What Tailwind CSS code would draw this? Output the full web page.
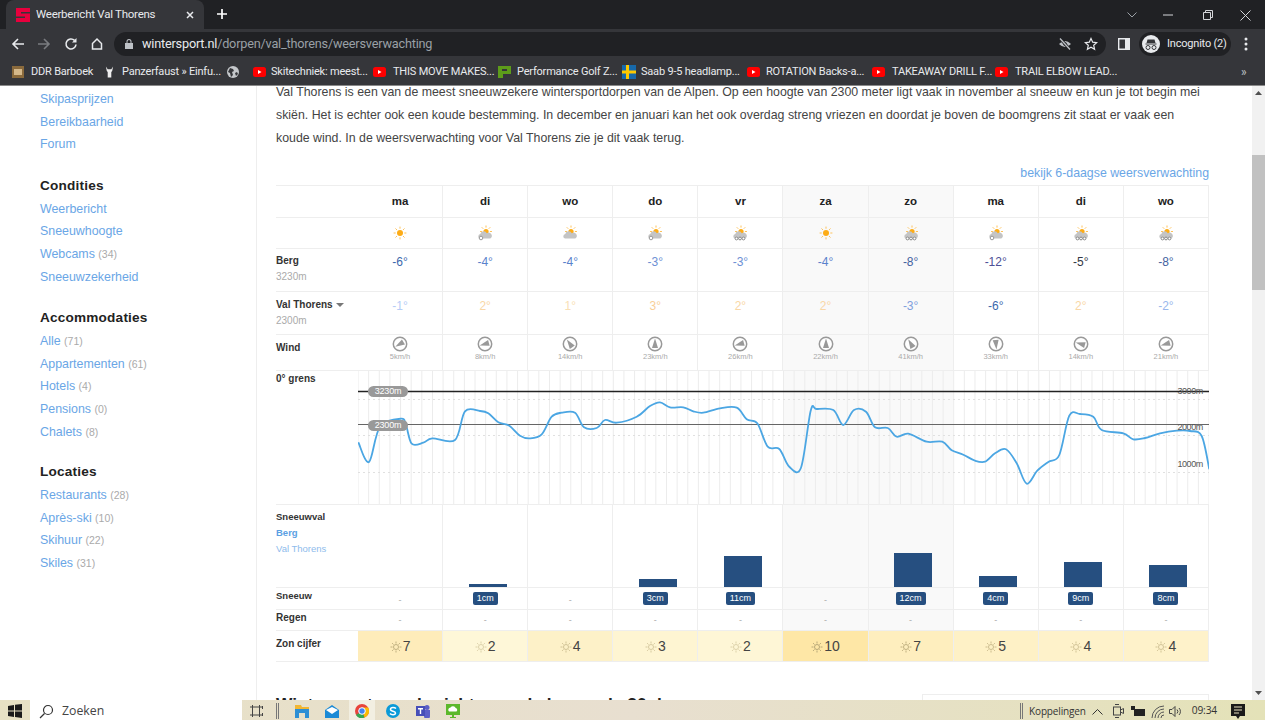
<!DOCTYPE html>
<html lang="nl">
<head>
    <meta charset="UTF-8">
    <meta name="viewport" content="width=device-width, initial-scale=1.0">
    <script src="https://cdn.jsdelivr.net/npm/@tailwindcss/browser@4"></script>
    <title>Weerbericht Val Thorens</title>
</head>
<body class="bg-white overflow-hidden">
<div class="w-[1265px] h-[720px] flex flex-col overflow-hidden font-['Liberation_Sans',sans-serif]">

    <!-- tabs -->
    <div class="h-[29px] shrink-0 bg-[#202124] flex items-end text-[#e8eaed] font-['Roboto',sans-serif]">
        <div class="ml-[6px] w-[198px] h-[29px] bg-[#35363a] rounded-t-lg flex items-center pl-[10px] pr-[9px]">
            <svg class="w-[14px] h-[14px]" viewBox="0 0 14 14"><path fill="#e8003d" d="M0 0h14v4H5v1.500h9V14H0v-4h9V8.500H0z"/></svg>
            <span class="ml-[6px] text-[11.5px] whitespace-nowrap tracking-[-0.25px]">Weerbericht Val Thorens</span>
            <svg class="ml-auto w-[10px] h-[10px]" viewBox="0 0 10 10"><path d="M2 2l6 6M8 2l-6 6" stroke="#e8eaed" stroke-width="1.500"/></svg>
        </div>
        <svg class="ml-[12px] mb-[9px] w-[12px] h-[12px]" viewBox="0 0 12 12"><path d="M6 1v10M1 6h10" stroke="#fff" stroke-width="1.700"/></svg>
        <div class="ml-auto h-[28px] flex items-center">
            <svg class="w-[10px] h-[6px] mr-[26px]" viewBox="0 0 10 6"><path d="M.5.500L5 5 9.500.5" fill="none" stroke="#9aa0a6"/></svg>
            <svg class="w-[10px] h-[2px] mr-[30px]" viewBox="0 0 10 2"><path d="M0 1h10" stroke="#d5d7da"/></svg>
            <svg class="w-[10px] h-[10px] mr-[27px]" viewBox="0 0 10 10"><path d="M.5 2.500h7v7h-7zM2.500 2.500v-2h7v7h-2" fill="none" stroke="#d5d7da"/></svg>
            <svg class="w-[11px] h-[11px] mr-[14px]" viewBox="0 0 11 11"><path d="M.5.500l10 10M10.500.5l-10 10" stroke="#d5d7da"/></svg>
        </div>
    </div>

    <!-- toolbar -->
    <div class="h-[30px] shrink-0 bg-[#35363a] flex items-center font-['Roboto',sans-serif]">
        <svg class="ml-[11px] w-[14px] h-[14px]" viewBox="0 0 14 14"><path d="M13 7H2M7 2L2 7l5 5" fill="none" stroke="#e8eaed" stroke-width="1.600"/></svg>
        <svg class="ml-[12px] w-[14px] h-[14px]" viewBox="0 0 14 14"><path d="M1 7h11M7 2l5 5-5 5" fill="none" stroke="#7a7c80" stroke-width="1.600"/></svg>
        <svg class="ml-[13px] w-[14px] h-[14px]" viewBox="0 0 14 14"><path d="M12 7.500A5 5 0 1 1 10.500 3.400" fill="none" stroke="#e8eaed" stroke-width="1.600"/><path d="M12.500 1v4.500H8z" fill="#e8eaed"/></svg>
        <svg class="ml-[12px] w-[14px] h-[14px]" viewBox="0 0 14 14"><path d="M2.500 6.500L7 2l4.500 4.500V12h-9z" fill="none" stroke="#e8eaed" stroke-width="1.500"/></svg>
        <div class="ml-[10px] w-[992px] h-[24px] bg-[#202124] rounded-full flex items-center pl-[11px] pr-[8px]">
            <svg class="w-[8px] h-[10px]" viewBox="0 0 8 10"><path fill="#bdc1c6" d="M0 4h8v6H0zM1.500 4V2.500a2.500 2.500 0 0 1 5 0V4H5.500V2.500a1.500 1.500 0 0 0-3 0V4z"/></svg>
            <span class="ml-[9px] text-[12.7px] whitespace-nowrap tracking-[-0.2px] text-[#e8eaed]">wintersport.nl<span class="text-[#9aa0a6]">/dorpen/val_thorens/weersverwachting</span></span>
            <svg class="ml-auto w-[14px] h-[14px]" viewBox="0 0 14 14"><path d="M1 7q6-6 12 0q-6 6-12 0z" fill="#bdc1c6"/><circle cx="7" cy="7" r="1.800" fill="#202124"/><path d="M2 1.500l10 11" stroke="#202124" stroke-width="3"/><path d="M2 1.500l10 11" stroke="#bdc1c6" stroke-width="1.300"/></svg>
            <svg class="ml-[12px] w-[14px] h-[14px]" viewBox="0 0 14 14"><path d="M7 1.500l1.700 3.700 4 .4-3 2.700.9 4L7 10.300l-3.600 2 .9-4-3-2.700 4-.4z" fill="none" stroke="#e8eaed" stroke-width="1.200"/></svg>
        </div>
        <svg class="ml-[12px] w-[12px] h-[12px]" viewBox="0 0 12 12"><path d="M.7.700h10.600v10.600H.7z" fill="none" stroke="#e8eaed" stroke-width="1.400"/><path d="M7 1h4v10H7z" fill="#e8eaed"/></svg>
        <div class="ml-[9px] w-[92px] h-[24px] bg-[#202124] rounded-full flex items-center pl-[3px]">
            <svg class="w-[18px] h-[18px]" viewBox="0 0 18 18"><circle cx="9" cy="9" r="9" fill="#e8eaed"/><path d="M5.500 4.500h7l1 3.500h-9zM3.500 8.500h11v1h-11z" fill="#35363a"/><circle cx="6" cy="12.500" r="2" fill="none" stroke="#35363a"/><circle cx="12" cy="12.500" r="2" fill="none" stroke="#35363a"/></svg>
            <span class="ml-[7px] text-[11px] whitespace-nowrap tracking-[-0.2px] text-[#e8eaed]">Incognito (2)</span>
        </div>
        <svg class="ml-[13px] w-[4px] h-[14px]" viewBox="0 0 4 14"><circle cx="2" cy="2" r="1.500" fill="#e8eaed"/><circle cx="2" cy="7" r="1.500" fill="#e8eaed"/><circle cx="2" cy="12" r="1.500" fill="#e8eaed"/></svg>
    </div>

    <!-- bladwijzers -->
    <div class="h-[27px] shrink-0 bg-[#35363a] border-b border-[#8a8a8a] flex items-center text-[11px] tracking-[-0.2px] text-[#e8eaed] font-['Roboto',sans-serif] whitespace-nowrap">
        <div class="w-[93px] ml-[12px] flex items-center gap-[7px]">
            <svg class="w-[12px] h-[12px]" viewBox="0 0 12 12"><rect width="12" height="12" fill="#8a6a3c"/><rect x="2" y="3" width="8" height="6" fill="#d4b88a"/></svg>DDR Barboek</div>
        <div class="w-[122px] flex items-center gap-[8px]">
            <svg class="w-[9px] h-[14px]" viewBox="0 0 10 14"><path d="M1 1l2 3h4l2-3-1 5-1 1v6H3V7L2 6z" fill="#eee"/></svg>Panzerfaust » Einfu...</div>
        <div class="w-[26px]">
            <svg class="w-[12px] h-[12px]" viewBox="0 0 12 12"><circle cx="6" cy="6" r="6" fill="#c4c7ca"/><path d="M3 2l3 1 1 2-2 1 1 3-2 2-1-4-2-1zM8 7l2-1 1 2-2 2z" fill="#35363a"/></svg></div>
        <div class="w-[120px] flex items-center gap-[3px]" data-yt>Skitechniek: meest...</div>
        <div class="w-[125px] flex items-center gap-[5px]" data-yt>THIS MOVE MAKES...</div>
        <div class="w-[124px] flex items-center gap-[6px]">
            <svg class="w-[13px] h-[12px]" viewBox="0 0 13 12"><path d="M0 0h13v8H5v4H0zM4 3v2h5V3z" fill="#5d9c1a" fill-rule="evenodd"/></svg>Performance Golf Z...</div>
        <div class="w-[125px] flex items-center gap-[5px]">
            <svg class="w-[14px] h-[14px]" viewBox="0 0 14 14"><rect width="14" height="14" fill="#1769aa"/><path d="M0 5.500h14v3H0zM4 0h3v14H4z" fill="#fdc800"/></svg>Saab 9-5 headlamp...</div>
        <div class="w-[125px] flex items-center gap-[4px]" data-yt>ROTATION  Backs-a...</div>
        <div class="w-[123px] flex items-center gap-[5px]" data-yt>TAKEAWAY DRILL F...</div>
        <div class="w-[246px] flex items-center gap-[5px]" data-yt>TRAIL ELBOW LEAD...</div>
        <span class="text-[12px] text-[#bdc1c6]">»</span>
    </div>

    <!-- pagina -->
    <div class="flex-1 min-h-0 flex overflow-hidden relative">
        <aside class="w-[257px] shrink-0 border-r border-[#eeeeee] pl-[40px] pt-[2px] text-[12.4px] leading-[22.7px] text-[#6aa6e6]">
            <div>Skipasprijzen</div>
            <div>Bereikbaarheid</div>
            <div>Forum</div>
            <h3 class="mt-[18px] text-[13.6px] leading-[23.5px] font-bold tracking-[0.2px] text-[#222222]">Condities</h3>
            <div>Weerbericht</div>
            <div>Sneeuwhoogte</div>
            <div>Webcams <span class="text-[10.5px] text-[#aaaaaa]">(34)</span></div>
            <div>Sneeuwzekerheid</div>
            <h3 class="mt-[18px] text-[13.6px] leading-[23.5px] font-bold tracking-[0.2px] text-[#222222]">Accommodaties</h3>
            <div>Alle <span class="text-[10.5px] text-[#aaaaaa]">(71)</span></div>
            <div>Appartementen <span class="text-[10.5px] text-[#aaaaaa]">(61)</span></div>
            <div>Hotels <span class="text-[10.5px] text-[#aaaaaa]">(4)</span></div>
            <div>Pensions <span class="text-[10.5px] text-[#aaaaaa]">(0)</span></div>
            <div>Chalets <span class="text-[10.5px] text-[#aaaaaa]">(8)</span></div>
            <h3 class="mt-[17px] text-[13.6px] leading-[23.5px] font-bold tracking-[0.2px] text-[#222222]">Locaties</h3>
            <div>Restaurants <span class="text-[10.5px] text-[#aaaaaa]">(28)</span></div>
            <div>Après-ski <span class="text-[10.5px] text-[#aaaaaa]">(10)</span></div>
            <div>Skihuur <span class="text-[10.5px] text-[#aaaaaa]">(22)</span></div>
            <div>Skiles <span class="text-[10.5px] text-[#aaaaaa]">(31)</span></div>
        </aside>

        <main class="flex-1 min-w-0 pl-[19px]">
            <p class="w-[940px] text-[12.35px] leading-[23px] text-[#444444] whitespace-nowrap -mt-[5px]">Val Thorens is een van de meest sneeuwzekere wintersportdorpen van de Alpen. Op een hoogte van 2300 meter ligt vaak in november al sneeuw en kun je tot begin mei<br>skiën. Het is echter ook een koude bestemming. In december en januari kan het ook overdag streng vriezen en doordat je boven de boomgrens zit staat er vaak een<br>koude wind. In de weersverwachting voor Val Thorens zie je dit vaak terug.</p>
            <div class="w-[933px] mt-[12px] text-right text-[12.35px] leading-[23px] text-[#6aa6e6]">bekijk 6-daagse weersverwachting</div>
            <div id="weer" class="w-[933px] grid grid-cols-[82px_repeat(10,85.1px)] grid-rows-[32px_31px_43px_43px_36px_134px_83px_22px_21px_31px] border-t border-[#eeeeee]"></div>
            <div class="flex items-start w-[933px] mt-[32px]">
                <h2 class="text-[17.3px] font-bold leading-[20px] text-[#222222] whitespace-nowrap">Wintersport weerbericht voor de komende 30 dagen</h2>
                <div class="ml-auto w-[287px] h-[20px] border border-[#eeeeee]"></div>
            </div>
        </main>

        <!-- scrollbar -->
        <div class="absolute right-0 top-0 bottom-0 w-[13px] bg-[#f1f1f1] flex flex-col items-center justify-between py-[5px]">
            <svg class="w-[7px] h-[4px]" viewBox="0 0 7 4"><path d="M3.500 0L7 4H0z" fill="#505050"/></svg>
            <svg class="w-[7px] h-[4px]" viewBox="0 0 7 4"><path d="M0 0h7L3.500 4z" fill="#505050"/></svg>
            <div class="absolute top-[69px] left-0 w-[13px] h-[135px] bg-[#c1c1c1]"></div>
        </div>
    </div>

    <!-- taakbalk -->
    <div class="h-[20px] shrink-0 flex items-center pt-[2px] bg-gradient-to-r from-[#e7e1c4] via-[#e8dfd0] to-[#e4e2b8] text-[#333333] font-['Open_Sans',sans-serif]">
        <svg class="ml-[8px] w-[14px] h-[14px]" viewBox="0 0 14 14"><path fill="#1a1a1a" d="M0 2l6-1v5.500H0zM7 .8L14 0v6.500H7zM0 7.500h6V13l-6-1zM7 7.500h7V14l-7-1z"/></svg>
        <div class="ml-[8px] -mt-[2px] w-[212px] h-[20px] bg-white flex items-center pl-[9px] pt-[3px] text-[12.3px] text-[#444444]">
            <svg class="w-[15px] h-[15px]" viewBox="0 0 15 15"><circle cx="9" cy="6" r="4.500" fill="none" stroke="#333" stroke-width="1.200"/><path d="M5.500 9.500L1 14" stroke="#333" stroke-width="1.200"/></svg>
            <span class="ml-[8px]">Zoeken</span>
        </div>
        <svg class="ml-[8px] w-[14px] h-[14px]" viewBox="0 0 14 14"><path d="M2.500 1v12M9.500 1v12M0 3h12M0 11h12M12.500 2v3M12.500 9v3" fill="none" stroke="#444"/></svg>
        <div class="ml-[12px] w-[3px] h-[16px] border-x border-[#777777]"></div>
        <svg class="ml-[16px] w-[14px] h-[13px]" viewBox="0 0 14 13"><path d="M0 0h6l1 2h7v3H0z" fill="#f2b632"/><path d="M0 4h14v9h-4V8H4v5H0z" fill="#2d8fd5"/></svg>
        <svg class="ml-[16px] w-[14px] h-[13px]" viewBox="0 0 14 13"><path d="M0 5l7-5 7 5v8H0z" fill="#1b8ad6"/><path d="M1 5l6 4 6-4-6-3z" fill="#fff"/></svg>
        <div class="ml-[10px] -mt-[2px] w-[26px] h-[20px] pt-[2px] bg-[#f2efe2] flex items-center justify-center">
            <svg class="w-[14px] h-[14px]" viewBox="0 0 14 14"><circle cx="7" cy="7" r="7" fill="#e8453c"/><path d="M7 7L1 11a7 7 0 0 0 8.500 2.500z" fill="#34a853"/><path d="M7 3.500h6.200a7 7 0 0 1-3.700 10z" fill="#fbbc05"/><circle cx="7" cy="7" r="3.300" fill="#4285f4" stroke="#fff"/></svg>
        </div>
        <svg class="ml-[11px] w-[14px] h-[14px]" viewBox="0 0 14 14"><circle cx="7" cy="7" r="7" fill="#0a9ad8"/><path d="M10 4.500Q9 3.500 7 3.500 4.500 3.500 4.500 5.300 4.500 6.700 7 7.200 9.500 7.700 9.500 9 9.500 10.700 7 10.700 5 10.700 4 9.500" fill="none" stroke="#fff" stroke-width="1.500"/></svg>
        <svg class="ml-[16px] w-[14px] h-[14px]" viewBox="0 0 14 14"><circle cx="11" cy="3.500" r="2.500" fill="#5b5fc7"/><path d="M8 6h6v6a2 2 0 0 1-6 0z" fill="#5b5fc7"/><rect y="2" width="9" height="10" fill="#464eb8"/><path d="M2 4h5v1.500H5.200V10H3.800V5.500H2z" fill="#fff"/></svg>
        <svg class="ml-[16px] w-[14px] h-[14px]" viewBox="0 0 14 14"><rect width="14" height="11" fill="#5cb82c"/><path d="M3 7.500a2.300 2.300 0 0 1 1.500-4 3 3 0 0 1 5.200.5 2 2 0 0 1 .8 3.500z" fill="#fff"/><path d="M6 11h2v2h2v1H4v-1h2z" fill="#5cb82c"/></svg>

        <div class="ml-auto w-[3px] h-[16px] border-x border-[#777777]"></div>
        <span class="ml-[6px] text-[10px] tracking-[-0.15px]">Koppelingen</span>
        <svg class="ml-[6px] w-[11px] h-[7px]" viewBox="0 0 11 7"><path d="M.5 6.500l5-5 5 5" fill="none" stroke="#333"/></svg>
        <svg class="ml-[10px] w-[11px] h-[16px]" viewBox="0 0 11 16"><rect x=".5" y="4" width="7" height="8" fill="none" stroke="#444"/><path d="M7.500 7l3-1.500v5l-3-1.500M2 1.500h4M2 14.500h4" fill="none" stroke="#444"/></svg>
        <svg class="ml-[7px] w-[14px] h-[10px]" viewBox="0 0 14 10"><path d="M0 0h4v3h10v7H3V4H0z" fill="#222"/></svg>
        <svg class="ml-[6px] w-[14px] h-[13px]" viewBox="0 0 14 13"><path d="M1 13A12 12 0 0 1 13 1M4 13a9 9 0 0 1 9-9M7 13a6 6 0 0 1 6-6M10 13a3 3 0 0 1 3-3" fill="none" stroke="#555"/></svg>
        <svg class="ml-[4px] w-[13px] h-[13px]" viewBox="0 0 13 13"><path d="M.5 4.500h2.500L6 1.500v10L3 8.500H.5z" fill="none" stroke="#444"/><path d="M8 4.500a3 3 0 0 1 0 4M10 3a5 5 0 0 1 0 7" fill="none" stroke="#444"/></svg>
        <span class="ml-[10px] text-[10.2px] tracking-[-0.15px]">09:34</span>
        <svg class="ml-[14px] mr-[20px] w-[14px] h-[15px]" viewBox="0 0 14 15"><path d="M0 0h14v12H9l-2 3-2-3H0z" fill="#1a1a1a"/><path d="M3 3h8M3 6h8M3 9h5" stroke="#e8e0c0"/></svg>
    </div>
</div>

<script>
    // youtube icoontjes in de bladwijzerbalk
    const ytIcon = '<svg class="w-[13px] h-[10px] mr-[2px]" viewBox="0 0 13 10"><rect width="13" height="10" rx="2.500" fill="#f00"/><path d="M5 3l3.500 2L5 7z" fill="#fff"/></svg>'
    document.querySelectorAll('[data-yt]').forEach(el => el.insertAdjacentHTML('afterbegin', ytIcon))

    const dagen = ['ma', 'di', 'wo', 'do', 'vr', 'za', 'zo', 'ma', 'di', 'wo']
    const iconen = [0, 2, 1, 2, 3, 0, 3, 2, 3, 3]
    const berg = [['-6°', '#3c68ad'], ['-4°', '#5a82cc'], ['-4°', '#5a82cc'], ['-3°', '#6d90d4'], ['-3°', '#6d90d4'], ['-4°', '#5a82cc'], ['-8°', '#44639f'], ['-12°', '#4d4f96'], ['-5°', '#333844'], ['-8°', '#44639f']]
    const dal = [['-1°', '#b6ccf6'], ['2°', '#f9d7a6'], ['1°', '#f9dfb6'], ['3°', '#f9cf97'], ['2°', '#f9d7a6'], ['2°', '#f9d7a6'], ['-3°', '#7f9fdd'], ['-6°', '#3c68ad'], ['2°', '#f9d7a6'], ['-2°', '#9ab7ec']]
    const wind = [['5km/h', 240], ['8km/h', 255], ['14km/h', 325], ['23km/h', 0], ['26km/h', 255], ['22km/h', 0], ['41km/h', 330], ['33km/h', 175], ['14km/h', 285], ['21km/h', 255]]
    const balken = [0, 3, 0, 8, 31, 0, 34, 11, 25, 22]
    const sneeuw = ['', '1cm', '', '3cm', '11cm', '', '12cm', '4cm', '9cm', '8cm']
    const zon = [[7, '#feecba'], [2, '#fef7d8'], [4, '#fdf1c8'], [3, '#fef5d2'], [2, '#fef6d6'], [10, '#fee7a6'], [7, '#feeebe'], [5, '#fef1c6'], [4, '#fef2ca'], [4, '#fef2ca']]

    function weer_icoon(type) {
        let stralen = ''
        const cx = type == 0 ? 8 : 9, cy = type == 0 ? 8 : 6.5, r = type == 0 ? 3 : 2.6
        for (let i = 0; i < 8; i++) {
            const a = i * Math.PI / 4
            stralen += `<line x1="${cx + Math.cos(a) * (r + 1.3)}" y1="${cy + Math.sin(a) * (r + 1.3)}" x2="${cx + Math.cos(a) * (r + 3.4)}" y2="${cy + Math.sin(a) * (r + 3.4)}" stroke="#fdc25a" stroke-width="1"/>`
        }
        let wolk = ''
        if (type > 0) wolk = '<path d="M3 13.500a2.300 2.300 0 0 1 .3-4.500 3.500 3.500 0 0 1 6.500-.8 2.700 2.700 0 0 1 3.500 5.300z" fill="#c4c4c4"/>'
        if (type == 2) wolk += '<circle cx="4" cy="13" r="1.800" fill="#fff" stroke="#999"/>'
        if (type == 3) wolk += '<circle cx="4.500" cy="13.500" r="1.400" fill="#fff" stroke="#888"/><circle cx="8" cy="13.500" r="1.400" fill="#fff" stroke="#888"/><circle cx="11.500" cy="13.500" r="1.400" fill="#fff" stroke="#888"/>'
        return `<svg class="w-[16px] h-[16px]" viewBox="0 0 16 16"><circle cx="${cx}" cy="${cy}" r="${r}" fill="#fdac16"/>${stralen}${wolk}</svg>`
    }

    function wind_icoon(hoek) {
        return `<svg class="w-[16px] h-[16px]" viewBox="0 0 16 16"><circle cx="8" cy="8" r="6.700" fill="#fff" stroke="#999" stroke-width="1.500"/><path d="M8 2.500L5 12h6z" fill="#999" transform="rotate(${hoek} 8 8)"/></svg>`
    }

    // hoe lager het cijfer, hoe flauwer de zon
    function zon_icoon(cijfer) {
        let s = ''
        for (let i = 0; i < 8; i++) {
            const a = i * Math.PI / 4
            s += `<line x1="${6 + Math.cos(a) * 3.5}" y1="${6 + Math.sin(a) * 3.5}" x2="${6 + Math.cos(a) * 5.5}" y2="${6 + Math.sin(a) * 5.5}" stroke="#b8a878"/>`
        }
        return `<svg class="w-[12px] h-[12px] mt-[2px]" viewBox="0 0 12 12" style="opacity:${0.3 + cijfer * 0.08}"><circle cx="6" cy="6" r="2.500" fill="none" stroke="#b8a878"/>${s}</svg>`
    }

    function achtergrond(i) {
        return (i == 5 || i == 6) ? 'bg-[#f9f9f9]' : 'bg-white'
    }

    const lijn = 'border-b border-[#eeeeee]'
    let html = ''

    function rij(label, cel) {
        html += `<div class="${lijn}">${label}</div>`
        for (let i = 0; i < 10; i++) html += cel(i)
    }
    const kolom = 'border-r border-[#e8e8e8] ' + lijn

    rij('', i => `<div class="${kolom} ${achtergrond(i)} flex items-center justify-center text-[11.5px] font-bold text-[#222222]">${dagen[i]}</div>`)
    rij('', i => `<div class="${kolom} ${achtergrond(i)} flex items-center justify-center">${weer_icoon(iconen[i])}</div>`)
    rij('<div class="pt-[4px] text-[10px] leading-[16px] font-bold text-[#333333]">Berg<div class="font-normal text-[#aaaaaa]">3230m</div></div>',
        i => `<div class="${kolom} ${achtergrond(i)} pt-[5px] text-center text-[12px] leading-[16px]" style="color:${berg[i][1]}">${berg[i][0]}</div>`)
    rij('<div class="pt-[5px] text-[10px] leading-[16px] font-bold text-[#333333] flex flex-wrap items-center">Val Thorens<svg class="ml-[3px] w-[8px] h-[4px]" viewBox="0 0 8 4"><path d="M0 0h8L4 4z" fill="#777"/></svg><div class="w-full font-normal text-[#aaaaaa]">2300m</div></div>',
        i => `<div class="${kolom} ${achtergrond(i)} pt-[6px] text-center text-[12px] leading-[16px]" style="color:${dal[i][1]}">${dal[i][0]}</div>`)
    rij('<div class="pt-[5px] text-[10px] leading-[16px] font-bold text-[#333333]">Wind</div>',
        i => `<div class="${kolom} ${achtergrond(i)} flex flex-col items-center pt-[1px] text-[7.500px] leading-[10px] text-[#aaaaaa]">${wind_icoon(wind[i][1])}${wind[i][0]}</div>`)

    html += `<div class="${lijn} text-[10px] leading-[16px] font-bold text-[#333333]">0° grens</div>`
    html += `<div class="col-span-10 ${lijn} relative"><svg id="grafiek" class="absolute inset-0 w-[851px] h-[133px]" viewBox="0 0 851 133"></svg>
        <span class="absolute left-[10px] top-[15px] w-[40px] h-[11px] rounded-full bg-[#999999] text-white text-[9px] tracking-[-0.2px] leading-[11px] text-center">3230m</span>
        <span class="absolute left-[10px] top-[49px] w-[40px] h-[11px] rounded-full bg-[#999999] text-white text-[9px] tracking-[-0.2px] leading-[11px] text-center">2300m</span>
        <span class="absolute right-[6px] top-[15px] text-[9px] tracking-[-0.4px] leading-[11px] text-[#555555]">3000m</span>
        <span class="absolute right-[6px] top-[51px] text-[9px] tracking-[-0.4px] leading-[11px] text-[#555555]">2000m</span>
        <span class="absolute right-[6px] top-[88px] text-[9px] tracking-[-0.4px] leading-[11px] text-[#555555]">1000m</span></div>`

    rij('<div class="pt-[4px] text-[9.500px] leading-[16px] font-bold text-[#333333]">Sneeuwval<div class="text-[#5b9fe3]">Berg</div><div class="font-normal text-[#8fbcec]">Val Thorens</div></div>',
        i => `<div class="${kolom} ${achtergrond(i)} flex items-end justify-center pl-[5px]"><div class="w-[38px] bg-[#264f80]" style="height:${balken[i]}px"></div></div>`)
    rij('<div class="pt-[1px] text-[9.500px] leading-[14px] font-bold text-[#333333]">Sneeuw</div>',
        i => `<div class="${kolom} ${achtergrond(i)} flex justify-center pt-[4px]">${sneeuw[i] ? `<span class="h-[13px] px-[4px] rounded-[2px] bg-[#264f80] text-white text-[9px] leading-[13px]">${sneeuw[i]}</span>` : '<span class="pt-[2px] text-[9px] leading-[13px] text-[#aaaaaa]">-</span>'}</div>`)
    rij('<div class="pt-[1px] text-[10px] leading-[14px] font-bold text-[#333333]">Regen</div>',
        i => `<div class="${kolom} ${achtergrond(i)} text-center pt-[4px] text-[9px] leading-[13px] text-[#aaaaaa]">-</div>`)
    rij('<div class="pt-[6px] text-[10px] leading-[14px] font-bold text-[#333333]">Zon cijfer</div>',
        i => `<div class="${kolom} flex items-center justify-center gap-[1px] text-[14px] text-[#444444]" style="background:${zon[i][1]}">${zon_icoon(zon[i][0])}${zon[i][0]}</div>`)

    document.getElementById('weer').innerHTML = html

    /* GRAFIEK VAN DE 0 GRADEN GRENS */
    const punten = [[358.3,442.3],[369,462],[380,426.7],[401,418.7],[406,425],[411.7,443.7],[423.3,442.7],[432.3,438.3],[455,440],[465,411.3],[480,411],[488.3,413.3],[498.3,422.3],[509.3,425.7],[520,435.7],[530,438.3],[541.7,434.3],[551.7,416.7],[561.7,412.7],[575,412.7],[584,427.3],[596.7,428],[605,420],[616.7,422.7],[636.7,416.7],[650,406],[660,402.3],[670,407.3],[683.3,407.3],[693.3,411.3],[703.3,412.7],[720,408.3],[736.7,407.7],[746.7,419.3],[757.3,423.3],[767.7,446.7],[779.3,449],[789.3,466.7],[801,467.7],[810.7,410.7],[816.7,409],[833.3,410],[843.3,425],[854,410],[866,411.7],[875,427.3],[887.7,428],[896.7,436.7],[908.3,433.7],[926.7,441.7],[942.3,441.7],[951.7,450.3],[963.3,454.7],[975,460.7],[985,461.7],[995,453.3],[1006,449.3],[1016.7,463.3],[1026.7,483.7],[1037.3,470.7],[1048.3,462],[1059.3,455],[1069.3,415.7],[1080,414],[1093.3,416.7],[1101.7,430],[1123.3,433.3],[1133.3,439.3],[1145,438],[1160,433.3],[1176.7,430.7],[1190,431],[1201.7,436],[1209.3,469.3]].map(p => [p[0] - 358, p[1] - 371])

    let svg = '<rect x="425.500" width="170.200" height="133" fill="#f9f9f9"/>'
    for (let i = 0; i <= 80; i++) {
        const x = i * 85.1 / 8
        svg += `<line x1="${x}" x2="${x}" y1="0" y2="133" stroke="#ececec"/>`
    }
    for (const y of [28.500, 64.500, 101.500]) {
        svg += `<line x1="0" x2="851" y1="${y}" y2="${y}" stroke="#e0e0e0" stroke-dasharray="2 3"/>`
    }
    let d = `M${punten[0][0]} ${punten[0][1]}`
    for (let i = 0; i < punten.length - 1; i++) {
        const p0 = punten[Math.max(i - 1, 0)], p1 = punten[i], p2 = punten[i + 1], p3 = punten[Math.min(i + 2, punten.length - 1)]
        d += `C${p1[0] + (p2[0] - p0[0]) / 6} ${p1[1] + (p2[1] - p0[1]) / 6} ${p2[0] - (p3[0] - p1[0]) / 6} ${p2[1] - (p3[1] - p1[1]) / 6} ${p2[0]} ${p2[1]}`
    }
    svg += `<path d="M0 20.500H851" stroke="#222" stroke-width="1.300"/><path d="M0 53.500H851" stroke="#666"/>`
    svg += `<path d="${d}" fill="none" stroke="#4ba6e3" stroke-width="1.800"/>`
    document.getElementById('grafiek').innerHTML = svg
</script>
</body>
</html>
